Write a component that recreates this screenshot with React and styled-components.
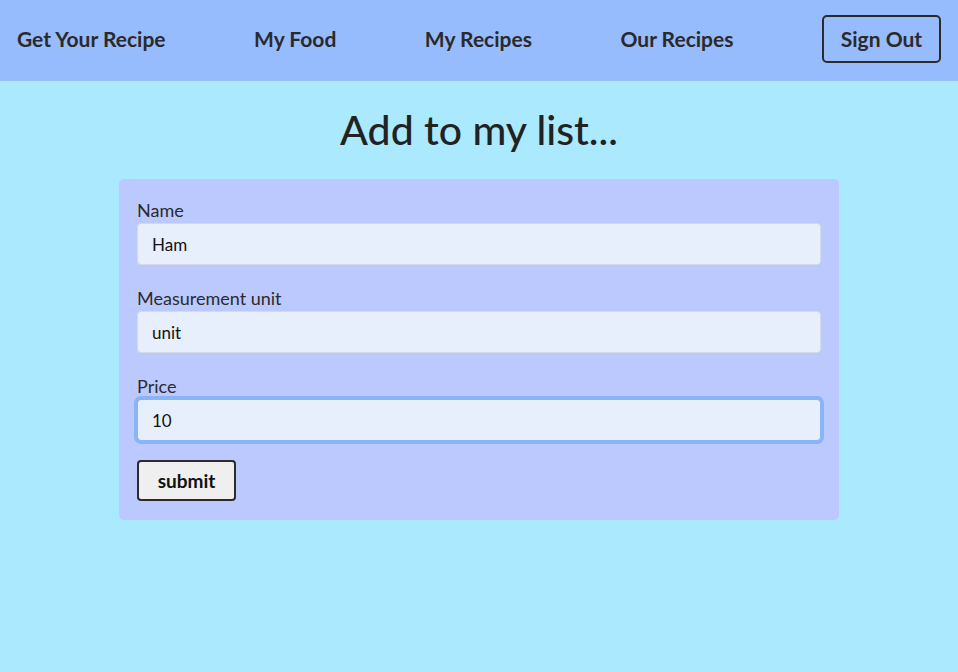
import React, { useState } from 'react';
import styled, { createGlobalStyle } from 'styled-components';

const GlobalStyle = createGlobalStyle`
  html, body {
    margin: 0;
    padding: 0;
    background: #aae9fe;
    font-family: "Lato", "Open Sans", sans-serif;
    color: #222;
  }
  #root {
    min-height: 672px;
  }
`;

const NavBar = styled.nav`
  height: 81px;
  background: #97bcfe;
  display: flex;
  align-items: center;
  justify-content: space-between;
  padding: 0 17px 4px;
  box-sizing: border-box;
`;

const NavLink = styled.a`
  font-size: 21px;
  font-weight: 700;
  color: #2a2a2a;
  text-decoration: none;
  cursor: pointer;
`;

const SignOutButton = styled.button`
  width: 119px;
  height: 48px;
  border: 2px solid #2b2b2b;
  border-radius: 5px;
  background: transparent;
  font-family: inherit;
  font-size: 21px;
  font-weight: 700;
  color: #2a2a2a;
  cursor: pointer;
`;

const Main = styled.main`
  display: flex;
  flex-direction: column;
  align-items: center;
`;

const Title = styled.h1`
  margin: 25px 0 25px;
  line-height: 48px;
  font-size: 41px;
  font-weight: 500;
  color: #222;
`;

const Card = styled.form`
  width: 720px;
  box-sizing: border-box;
  background: #bbc9fe;
  border-radius: 5px;
  padding: 20px 18px 19px;
  display: flex;
  flex-direction: column;
`;

const Field = styled.div`
  display: flex;
  flex-direction: column;
  margin-bottom: ${({ $last }) => ($last ? '19px' : '22px')};
`;

const Label = styled.label`
  font-size: 18px;
  line-height: 22px;
  margin-bottom: 2px;
  color: #2b2b2b;
`;

const Input = styled.input`
  height: 42px;
  box-sizing: border-box;
  border: 1px solid #d3dae8;
  border-radius: 4px;
  background: #e8effc;
  padding: 0 14px;
  font-family: inherit;
  font-size: 17px;
  color: #111;
  caret-color: #111;
  outline: ${({ $focused }) => ($focused ? '4px solid #8ab4f8' : 'none')};
  outline-offset: -1px;
`;

const SubmitButton = styled.button`
  align-self: flex-start;
  width: 99px;
  height: 41px;
  border: 2px solid #2b2b2b;
  border-radius: 4px;
  background: #efefef;
  font-family: inherit;
  font-size: 19px;
  font-weight: 700;
  color: #111;
  cursor: pointer;
`;

const navItems = ['Get Your Recipe', 'My Food', 'My Recipes', 'Our Recipes'];

export default function App() {
  const [name, setName] = useState('Ham');
  const [unit, setUnit] = useState('unit');
  const [price, setPrice] = useState('10');

  return (
    <>
      <GlobalStyle />
      <NavBar>
        {navItems.map((item) => (
          <NavLink key={item}>{item}</NavLink>
        ))}
        <SignOutButton>Sign Out</SignOutButton>
      </NavBar>
      <Main>
        <Title>Add to my list...</Title>
        <Card onSubmit={(e) => e.preventDefault()}>
          <Field>
            <Label htmlFor="name">Name</Label>
            <Input id="name" value={name} onChange={(e) => setName(e.target.value)} />
          </Field>
          <Field>
            <Label htmlFor="unit">Measurement unit</Label>
            <Input id="unit" value={unit} onChange={(e) => setUnit(e.target.value)} />
          </Field>
          <Field $last>
            <Label htmlFor="price">Price</Label>
            <Input
              id="price"
              $focused
              autoFocus
              value={price}
              onChange={(e) => setPrice(e.target.value)}
            />
          </Field>
          <SubmitButton type="submit">submit</SubmitButton>
        </Card>
      </Main>
    </>
  );
}
